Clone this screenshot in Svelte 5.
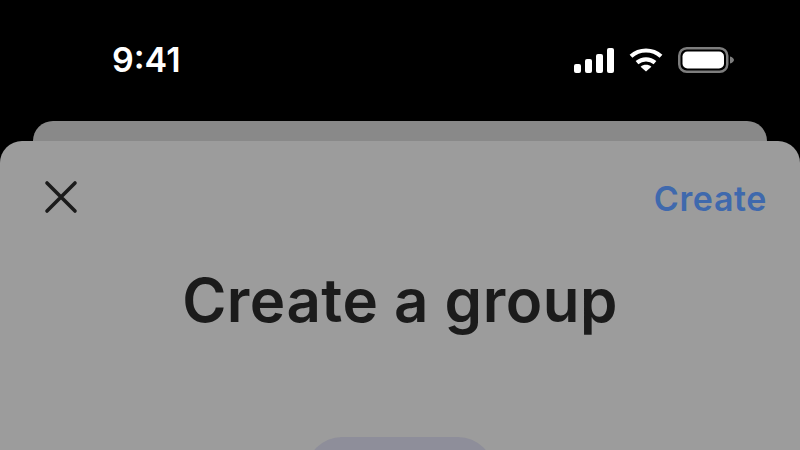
<script>
  const title = 'Create a group';
</script>

<div class="screen">
  <header class="status">
    <span class="time">9:41</span>
    <div class="indicators">
      <svg class="signal" width="40" height="25" viewBox="0 0 40 25" fill="#fff">
        <rect x="0" y="16" width="7" height="9" rx="2" />
        <rect x="11" y="11" width="7" height="14" rx="2" />
        <rect x="22" y="6" width="7" height="19" rx="2" />
        <rect x="33" y="0" width="7" height="25" rx="2" />
      </svg>
      <svg class="wifi" width="34" height="24" viewBox="0 0 34 24" fill="none" stroke="#fff" stroke-width="4.2">
        <path d="M2 8.2C10.5 .6 23.5 .6 32 8.2" />
        <path d="M8 14.6C13.2 10.2 20.8 10.2 26 14.6" />
        <path d="M17 23.6L11.6 18.8C14.6 16.2 19.4 16.2 22.4 18.8Z" fill="#fff" stroke="none" />
      </svg>
      <svg class="battery" width="56" height="26" viewBox="0 0 56 26">
        <rect x="1.25" y="1.25" width="48" height="23.5" rx="7.5" fill="none" stroke="#7d7d7d" stroke-width="2.5" />
        <rect x="4.5" y="4.5" width="41.5" height="17" rx="5" fill="#fff" />
        <path d="M52 9.5C54.4 10.2 56 11.4 56 13S54.4 15.8 52 16.5Z" fill="#7d7d7d" />
      </svg>
    </div>
  </header>

  <div class="back-card"></div>

  <main class="sheet">
    <nav class="toolbar">
      <svg class="close" width="34" height="34" viewBox="0 0 34 34" fill="none" stroke="#1b1b1b" stroke-width="3.6" stroke-linecap="round">
        <path d="M3 3L31 31M31 3L3 31" />
      </svg>
      <span class="create">Create</span>
    </nav>
    <h1>{title}</h1>
    <div class="avatar"></div>
  </main>
</div>

<style>
  :global(body) {
    margin: 0;
    background: #000;
  }
  .screen {
    width: 800px;
    height: 450px;
    overflow: hidden;
    background: #000;
    display: flex;
    flex-direction: column;
    font-family: Inter, "Liberation Sans", sans-serif;
  }
  .status {
    height: 121px;
    flex: none;
    box-sizing: border-box;
    padding: 40px 66px 0 112px;
    display: flex;
    justify-content: space-between;
    align-items: flex-start;
  }
  .time {
    color: #fff;
    font-size: 34px;
    font-weight: 600;
    line-height: 40px;
  }
  .indicators {
    display: flex;
    align-items: center;
    gap: 15px;
    height: 40px;
  }
  .back-card {
    flex: none;
    height: 20px;
    margin: 0 33px;
    background: #898989;
    border-radius: 20px 20px 0 0;
  }
  .sheet {
    flex: 1;
    background: #9c9c9c;
    border-radius: 22px 22px 0 0;
    display: flex;
    flex-direction: column;
    align-items: center;
  }
  .toolbar {
    align-self: stretch;
    box-sizing: border-box;
    height: 76px;
    padding: 0 33px 0 44px;
    display: flex;
    justify-content: space-between;
    align-items: flex-end;
  }
  .close {
    margin-bottom: 3px;
  }
  .create {
    color: #3f69ad;
    font-size: 34px;
    font-weight: 600;
    letter-spacing: 0.6px;
    line-height: 36px;
  }
  h1 {
    margin: 50px 0 0;
    color: #1b1b1b;
    font-size: 60px;
    font-weight: 600;
    letter-spacing: 0.5px;
    line-height: 66px;
  }
  .avatar {
    flex: none;
    width: 188px;
    height: 188px;
    margin-top: 104px;
    border-radius: 36px;
    background: #8e8e9a;
  }
</style>
